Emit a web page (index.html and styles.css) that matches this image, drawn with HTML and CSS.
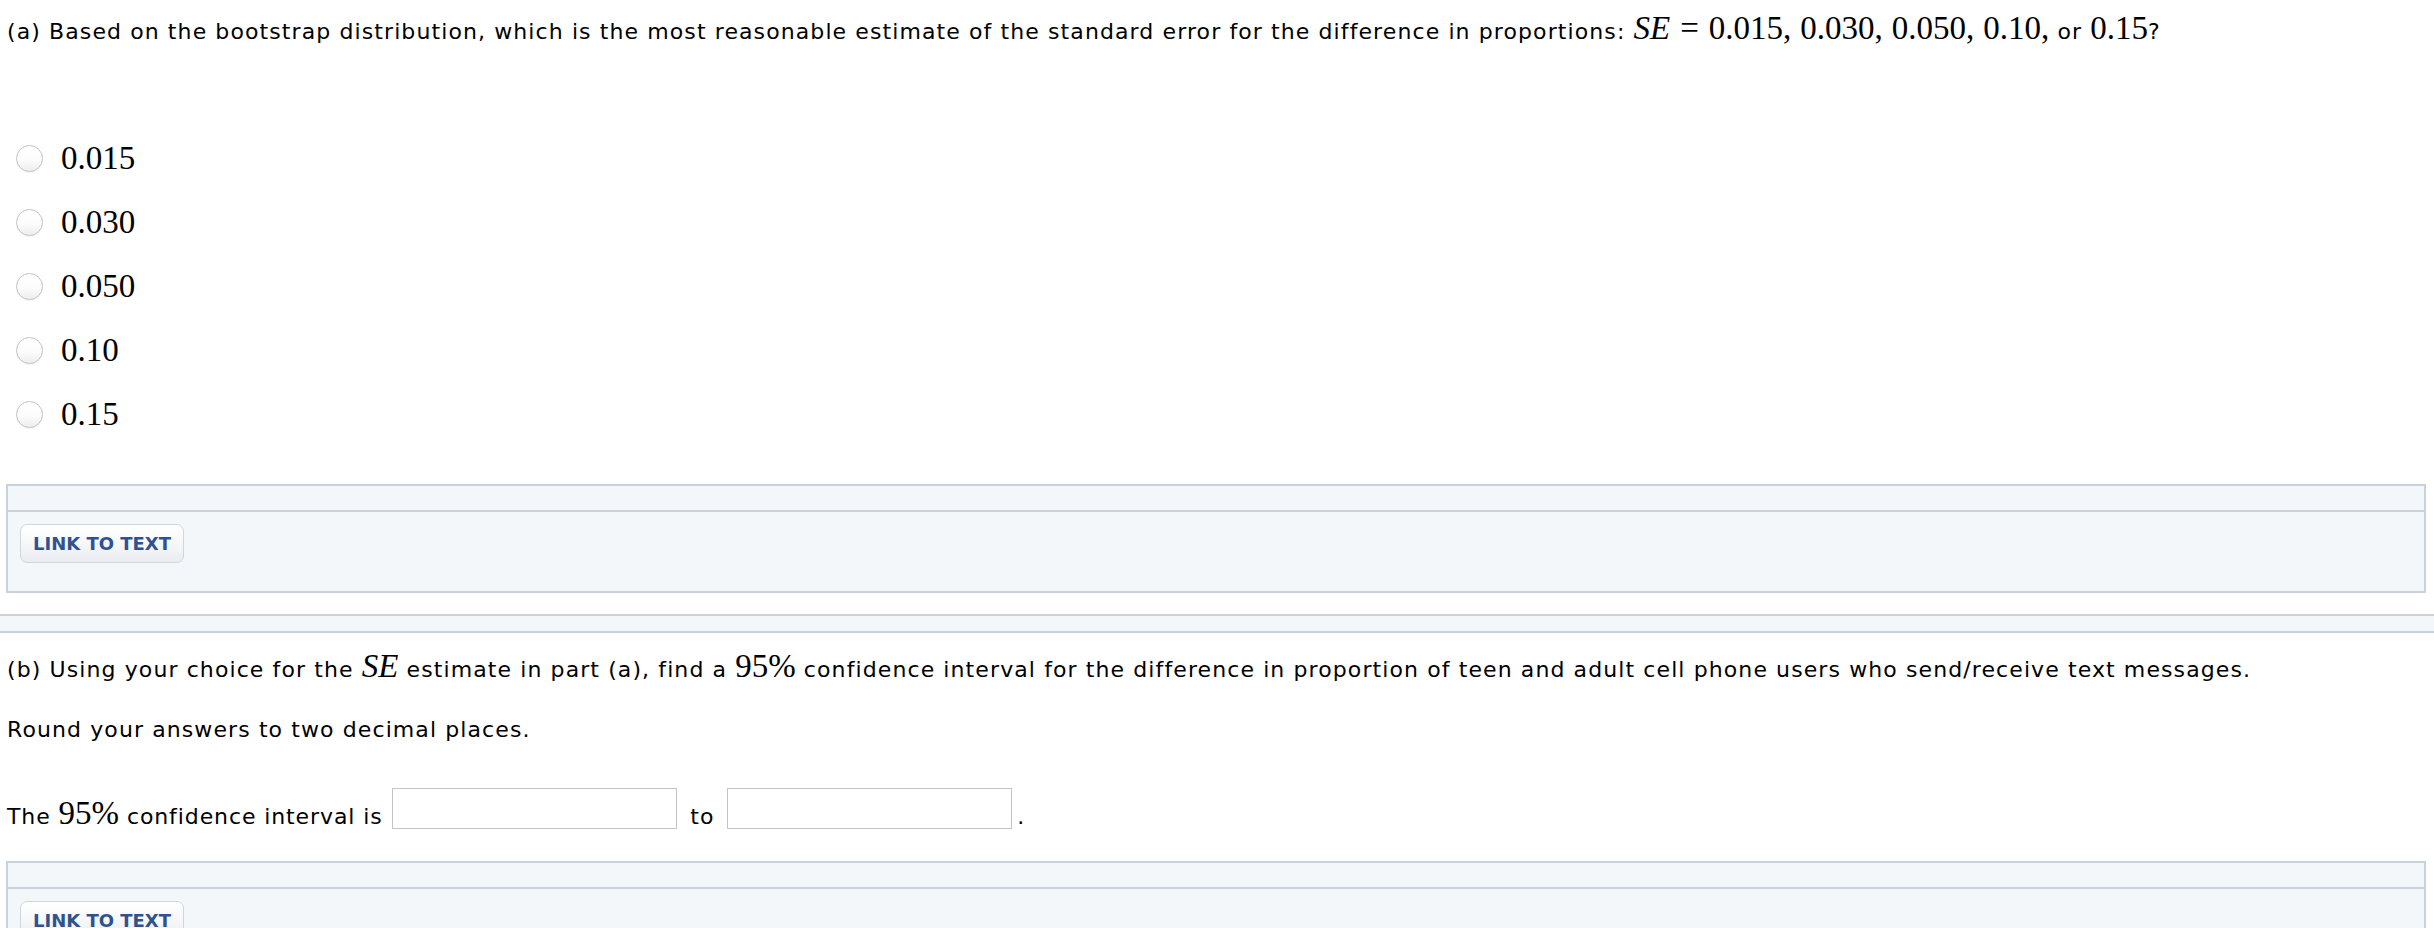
FILE: index.html
```html
<!DOCTYPE html>
<html lang="en">
<head>
<meta charset="utf-8">
<title>Bootstrap standard error question</title>
<link rel="stylesheet" href="styles.css">
</head>
<body>
<div class="page">
  <section class="question">
    <p class="prompt">(a) Based on the bootstrap distribution, which is the most reasonable estimate of the standard error for the difference in proportions: <span class="math"><i>SE</i><span class="eq">=</span>0.015,<span class="thin"></span>0.030,<span class="thin"></span>0.050,<span class="thin"></span>0.10,</span> or <span class="math">0.15</span>?</p>
    <ul class="options">
      <li class="option"><input type="radio" name="se" class="radio"><span class="math">0.015</span></li>
      <li class="option"><input type="radio" name="se" class="radio"><span class="math">0.030</span></li>
      <li class="option"><input type="radio" name="se" class="radio"><span class="math">0.050</span></li>
      <li class="option"><input type="radio" name="se" class="radio"><span class="math">0.10</span></li>
      <li class="option"><input type="radio" name="se" class="radio"><span class="math">0.15</span></li>
    </ul>
    <div class="panel">
      <div class="panel-head"></div>
      <div class="panel-body"><button class="link-btn">LINK TO TEXT</button></div>
    </div>
  </section>
</div>
<div class="divider"></div>
<div class="page">
  <section class="question">
    <p class="prompt b-prompt">(b) Using your choice for the <span class="math"><i>SE</i></span> estimate in part (a), find a <span class="math">95%</span> confidence interval for the difference in proportion of teen and adult cell phone users who send/receive text messages.</p>
    <p class="prompt round">Round your answers to two decimal places.</p>
    <p class="prompt interval">The <span class="math">95%</span> confidence interval is <input type="text" class="answer answer-first"> to <input type="text" class="answer">.</p>
    <div class="panel panel-last">
      <div class="panel-head"></div>
      <div class="panel-body"><button class="link-btn">LINK TO TEXT</button></div>
    </div>
  </section>
</div>
</body>
</html>
```
FILE: styles.css
```css
html, body {
  margin: 0;
  padding: 0;
  background: #ffffff;
}

body {
  font-family: Verdana, "DejaVu Sans", sans-serif;
  font-size: 22px;
  color: #000000;
  overflow: hidden;
}

.page {
  padding: 0 8px 0 6px;
}

.prompt {
  margin: 12px 0 0 1px;
  line-height: 40px;
  white-space: nowrap;
  letter-spacing: 1.1px;
}

.math {
  font-family: "Liberation Serif", "Times New Roman", serif;
  font-size: 33px;
  line-height: 1;
  letter-spacing: 0;
}

.math i {
  font-style: italic;
}

.eq {
  padding: 0 10px;
}

.thin {
  display: inline-block;
  width: 9px;
}

.options {
  list-style: none;
  margin: 74px 0 0 0;
  padding: 0;
}

.option {
  display: flex;
  align-items: center;
  height: 64px;
}

.radio {
  appearance: none;
  -webkit-appearance: none;
  margin: 0 18px 0 10px;
  width: 27px;
  height: 27px;
  border-radius: 50%;
  border: 1px solid #c2c2c2;
  background: linear-gradient(#ffffff 0%, #fcfcfc 55%, #ededed 100%);
  box-shadow: inset 0 1px 1px rgba(255,255,255,0.9), 0 1px 1px rgba(0,0,0,0.05);
  flex: none;
}

.panel {
  margin-top: 38px;
  border: 2px solid #c9d1db;
  background: #f4f7fa;
}

.panel-last {
  margin-top: 24px;
}

.panel-head {
  height: 24px;
  border-bottom: 2px solid #c9d1db;
}

.panel-body {
  padding: 12px 12px 28px 12px;
}

.link-btn {
  display: block;
  height: 39px;
  padding: 0 12px;
  border: 1px solid #cfd6df;
  border-radius: 7px;
  background: linear-gradient(#ffffff 0%, #f6f7f9 50%, #e9ecf0 100%);
  font-family: Verdana, "DejaVu Sans", sans-serif;
  font-weight: bold;
  font-size: 18px;
  color: #2f528f;
  letter-spacing: 0;
}

.divider {
  margin-top: 21px;
  height: 15px;
  border-top: 2px solid #c9d1db;
  border-bottom: 2px solid #c9d1db;
  background: #f4f7fa;
}

.b-prompt {
  margin-top: 17px;
}

.round {
  margin-top: 20px;
}

.interval {
  margin-top: 38px;
  letter-spacing: 0.9px;
}

.answer {
  box-sizing: border-box;
  width: 285px;
  height: 41px;
  margin: 0 5px;
  border: 1px solid #c4c4c4;
  background: #ffffff;
  vertical-align: text-bottom;
  font-size: 21px;
}

.answer-first {
  margin-left: 2px;
}
```
